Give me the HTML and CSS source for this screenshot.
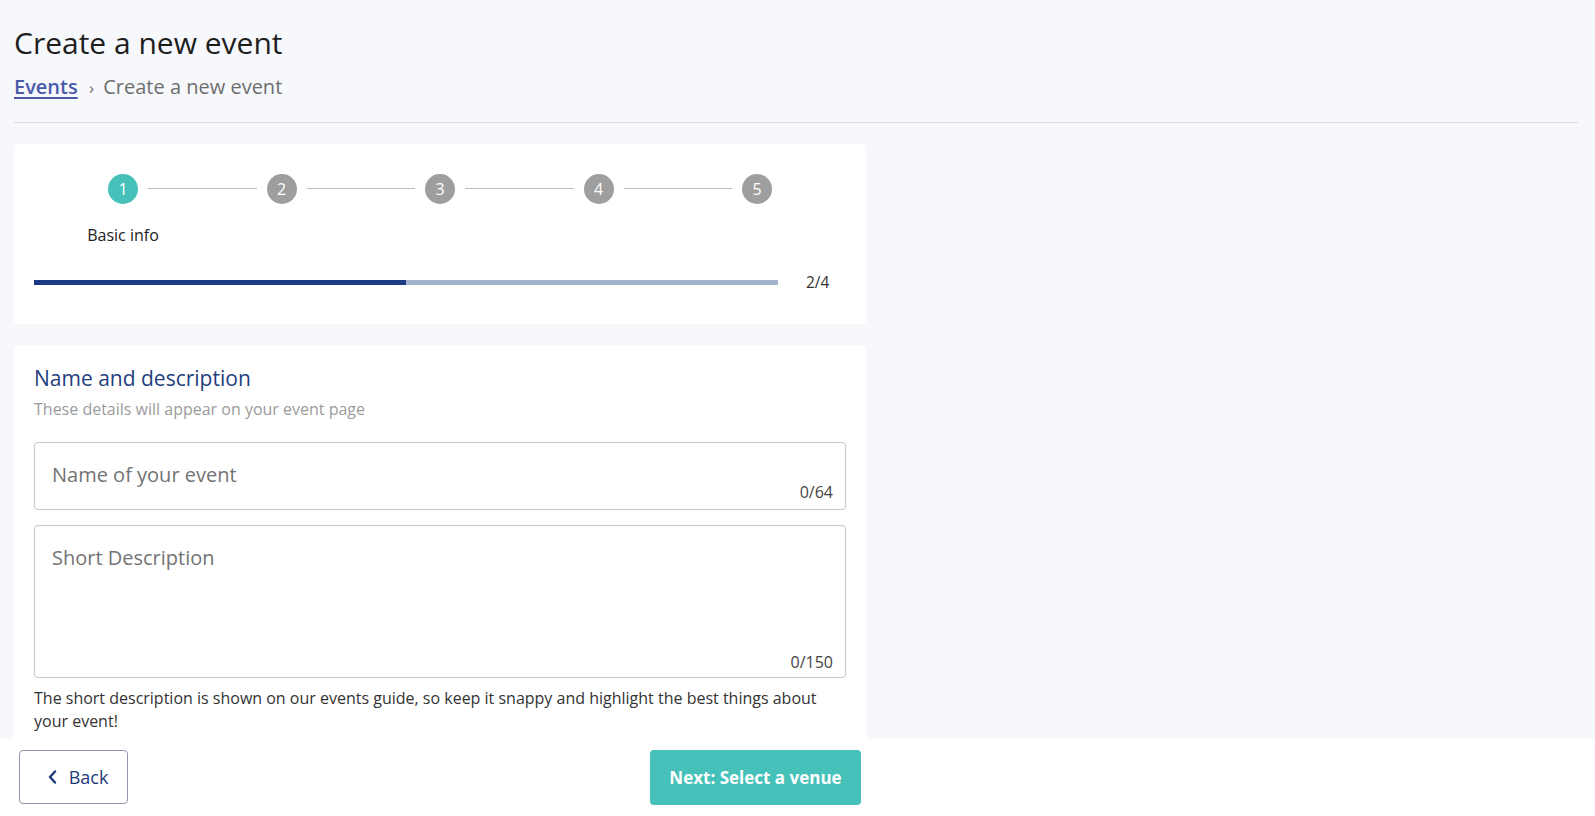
FILE: index.html
```html
<!DOCTYPE html>
<html lang="en">
<head>
<meta charset="UTF-8">
<meta name="viewport" content="width=device-width, initial-scale=1.0">
<title>Create a new event</title>
<link rel="stylesheet" href="styles.css">
</head>
<body>
<div class="page">
  <h1>Create a new event</h1>
  <div class="crumbs">
    <a href="#">Events</a>
    <span class="sep">›</span>
    <span class="current">Create a new event</span>
  </div>
  <hr class="divider">

  <div class="card steps-card">
    <div class="steps">
      <div class="step active">
        <div class="dot">1</div>
        <div class="step-label">Basic info</div>
      </div>
      <div class="line"></div>
      <div class="step"><div class="dot">2</div></div>
      <div class="line"></div>
      <div class="step"><div class="dot">3</div></div>
      <div class="line"></div>
      <div class="step"><div class="dot">4</div></div>
      <div class="line"></div>
      <div class="step"><div class="dot">5</div></div>
    </div>
    <div class="progress">
      <div class="track"><div class="fill" style="width:50%"></div></div>
      <span class="count">2/4</span>
    </div>
  </div>

  <div class="card form-card">
    <h2>Name and description</h2>
    <p class="sub">These details will appear on your event page</p>

    <div class="field">
      <input type="text" placeholder="Name of your event">
      <span class="counter">0/64</span>
    </div>

    <div class="field area">
      <textarea placeholder="Short Description"></textarea>
      <span class="counter">0/150</span>
    </div>

    <p class="help">The short description is shown on our events guide, so keep it snappy and highlight the best things about your event!</p>
    <div class="spacer"></div>
  </div>
</div>

<div class="footer">
  <div class="footer-inner">
    <button class="btn back">
      <svg width="9" height="14" viewBox="0 0 9 14"><path d="M7 1.5 L2 7 L7 12.5" fill="none" stroke="#1f3a7a" stroke-width="2.4" stroke-linecap="round" stroke-linejoin="round"/></svg>
      Back
    </button>
    <button class="btn next">Next: Select a venue</button>
  </div>
</div>
</body>
</html>
```

FILE: styles.css
```css
body { margin: 0; background: #f7f8fc; font-family: "Open Sans", "Noto Sans", Arial, sans-serif; color: #222; }
.page { padding: 24px 17px 120px 14px; }
h1 { font-size: 30px; font-weight: 400; line-height: 38px; margin: 0; color: #1e1e1e; }
.crumbs { margin-top: 11px; font-size: 20px; line-height: 28px; color: #6e6e6e; }
.crumbs a { color: #4b5bab; font-weight: 600; text-decoration: underline; text-underline-offset: 3px; }
.crumbs .sep { margin: 0 4px 0 6px; font-size: 17px; }
.divider { border: 0; border-top: 1px solid #dcdde2; margin: 20px 0 21px; }

.card { width: 852px; box-sizing: border-box; background: #fff; border-radius: 4px; }
.steps-card { padding: 30px 20px 31px; }
.steps { display: flex; padding: 0 74px; }
.step { width: 30px; display: flex; flex-direction: column; align-items: center; }
.dot { width: 30px; height: 30px; border-radius: 50%; background: #9e9e9e; color: #fff; font-size: 16px; line-height: 30px; text-align: center; }
.step.active .dot { background: #45c1b9; }
.step-label { margin-top: 20px; font-size: 16px; line-height: 22px; white-space: nowrap; color: #222; }
.line { flex: 1; height: 1px; background: #bdbdbd; margin: 14px 10px 0; }
.progress { display: flex; align-items: center; margin-top: 25px; height: 22px; }
.track { width: 744px; height: 5px; background: #a4b3cd; }
.fill { height: 5px; background: #1d3b85; }
.count { margin-left: 28px; font-size: 15.5px; color: #333; }

.form-card { margin-top: 21px; padding: 19px 20px 0; }
h2 { margin: 0; font-size: 21px; font-weight: 400; line-height: 28px; color: #24407e; }
.sub { margin: 6px 0 0; font-size: 16px; line-height: 22px; color: #9b9b9b; }
.field { margin-top: 22px; border: 1px solid #c6c6c6; border-radius: 4px; display: flex; flex-direction: column; padding: 20px 12px 7px 17px; }
.field input, .field textarea { border: 0; outline: none; padding: 0; font-family: inherit; font-size: 20px; color: #333; background: transparent; }
.field input { height: 24px; line-height: 24px; }
.field input::placeholder, .field textarea::placeholder { color: #737373; }
.counter { align-self: flex-end; margin-top: -5px; font-size: 16px; line-height: 20px; color: #444; }
.field.area { margin-top: 15px; padding: 20px 12px 5px 17px; }
.field.area textarea { height: 106px; line-height: 24px; resize: none; }
.field.area .counter { margin-top: 0; }
.help { margin: 9px 0 0; font-size: 16px; line-height: 23px; color: #333; }
.spacer { height: 60px; }

.footer { position: fixed; left: 0; right: 0; bottom: 0; height: 77px; background: #fff; box-sizing: border-box; padding-top: 11px; }
.footer-inner { width: 842px; margin-left: 19px; display: flex; justify-content: space-between; align-items: flex-start; }
.btn { font-family: inherit; border-radius: 4px; cursor: pointer; }
.back { width: 109px; height: 54px; background: #fff; border: 1px solid #8d96aa; color: #1f3a7a; font-size: 18px; font-weight: 500; display: flex; align-items: center; justify-content: center; gap: 12px; padding: 0 0 0 9px; }
.next { width: 211px; height: 55px; background: #45c1b9; border: 0; color: #fff; font-size: 17px; font-weight: 700; }
```
